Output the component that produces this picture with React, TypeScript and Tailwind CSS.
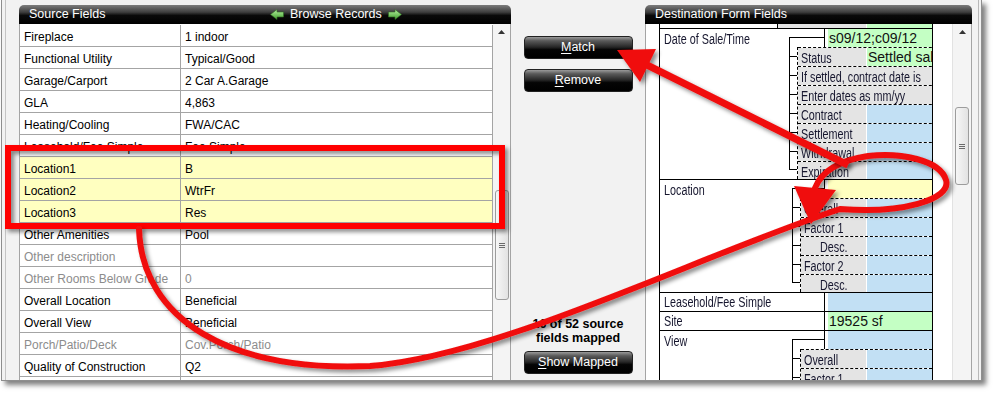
import React from "react";

type Row = { l: string; v: string; hl?: boolean; dim?: boolean };
const rows: Row[] = [
  { l: "Fireplace", v: "1 indoor" },
  { l: "Functional Utility", v: "Typical/Good" },
  { l: "Garage/Carport", v: "2 Car A.Garage" },
  { l: "GLA", v: "4,863" },
  { l: "Heating/Cooling", v: "FWA/CAC" },
  { l: "Leasehold/Fee Simple", v: "Fee Simple" },
  { l: "Location1", v: "B", hl: true },
  { l: "Location2", v: "WtrFr", hl: true },
  { l: "Location3", v: "Res", hl: true },
  { l: "Other Amenities", v: "Pool" },
  { l: "Other description", v: "", dim: true },
  { l: "Other Rooms Below Grade", v: "0", dim: true },
  { l: "Overall Location", v: "Beneficial" },
  { l: "Overall View", v: "Beneficial" },
  { l: "Porch/Patio/Deck", v: "Cov.Porch/Patio", dim: true },
  { l: "Quality of Construction", v: "Q2" },
  { l: "", v: "" },
];

const HDR =
  "h-[19px] shrink-0 rounded-t-[5px] bg-[linear-gradient(to_bottom,#7c7c7c_0%,#3e3e3e_38%,#0a0a0a_55%,#000_100%)] text-white text-[12.5px] leading-[17px] flex items-center font-['Liberation_Sans',sans-serif]";

function GreenArrow({ dir }: { dir: "l" | "r" }) {
  return (
    <svg width="14" height="11" viewBox="0 0 14 11" className={dir === "r" ? "" : "-scale-x-100"}>
      <defs>
        <linearGradient id={"ga" + dir} x1="0" y1="0" x2="0" y2="1">
          <stop offset="0" stopColor="#b6f0a0" />
          <stop offset="1" stopColor="#3f9e2c" />
        </linearGradient>
      </defs>
      <polygon points="0.5,3 7,3 7,0.5 13.5,5.5 7,10.5 7,8 0.5,8" fill={"url(#ga" + dir + ")"} stroke="#2f6d22" strokeWidth="0.6" />
    </svg>
  );
}

function Btn({ u, rest }: { u: string; rest: string }) {
  return (
    <div className="w-[109px] h-[23px] shrink-0 rounded-[4px] border border-[#222] bg-[linear-gradient(to_bottom,#9a9a9a_0%,#5a5a5a_18%,#262626_48%,#050505_60%,#000_100%)] flex items-center justify-center text-white text-[12.5px] leading-none font-['Liberation_Sans',sans-serif]">
      <span className="underline underline-offset-2">{u}</span>
      {rest}
    </div>
  );
}

function Thumb({ top, h }: { top: number; h: number }) {
  return (
    <div className="flex flex-col items-center">
      <div style={{ height: top }} />
      <div
        style={{ height: h }}
        className="w-[14px] rounded-[3px] border border-[#9c9c9c] bg-[linear-gradient(to_right,#f6f6f6,#e2e2e2)] flex flex-col items-center justify-center gap-[1px]"
      >
        <div className="w-[6px] h-px bg-[#6a6a6a]" />
        <div className="w-[6px] h-px bg-[#6a6a6a]" />
        <div className="w-[6px] h-px bg-[#6a6a6a]" />
      </div>
    </div>
  );
}

function UpArrow() {
  return (
    <svg width="7" height="4" viewBox="0 0 7 4">
      <polygon points="0,4 3.5,0 7,4" fill="#333" />
    </svg>
  );
}

function N({ children }: { children: React.ReactNode }) {
  return <span className="inline-block origin-left scale-x-[0.77] whitespace-nowrap">{children}</span>;
}

const GRAY = "bg-[#e4e4e4]";
const BLUE = "bg-[#c2e0f4]";
const GREEN = "bg-[#c4ffc4]";
const YELLOW = "bg-[#ffffc0]";

function Ticks({ first, steps }: { first: number; steps: number[] }) {
  return (
    <div className="w-[8px] shrink-0 flex flex-col">
      <div style={{ height: first }} className="border-l border-black" />
      {steps.map((s, i) => (
        <div key={i} style={{ height: s }} className="border-l border-t border-black" />
      ))}
      <div className="h-0 border-t border-black" />
    </div>
  );
}

type Sub = { l: string; full?: boolean; indent?: boolean; v?: string; vc?: string; tri?: boolean; h: number };

function SubTable({ rows, labelW }: { rows: Sub[]; labelW: number }) {
  return (
    <div className="flex-1 flex flex-col border-l border-dashed border-black">
      {rows.map((r, i) => (
        <div key={i} style={{ height: r.h }} className="shrink-0 flex border-t border-dashed border-black">
          {r.full ? (
            <div className={"flex-1 " + GRAY + " pl-[3px] pt-[2px] leading-[16px] whitespace-nowrap overflow-hidden"}>
              <N>{r.l}</N>
            </div>
          ) : (
            <>
              <div
                style={{ width: labelW }}
                className={GRAY + " shrink-0 pt-[2px] leading-[16px] whitespace-nowrap overflow-hidden " + (r.indent ? "pl-[19px]" : "pl-[3px]")}
              >
                <N>{r.l}</N>
              </div>
              <div className="w-px bg-white shrink-0" />
              <div className={"flex-1 relative overflow-hidden " + (r.vc || BLUE)}>
                {r.v && <div className="pl-px leading-[18px] text-[14px] whitespace-nowrap text-[#111]">{r.v}</div>}
                {r.tri && (
                  <svg className="absolute right-0 top-[2px]" width="9" height="14" viewBox="0 0 9 14">
                    <polygon points="0.5,0.5 8.5,7 0.5,13.5" fill="#ff1a1a" stroke="#7a0000" strokeWidth="1" />
                  </svg>
                )}
              </div>
            </>
          )}
        </div>
      ))}
    </div>
  );
}

function ValueCell({ color, text, h = 18 }: { color: string; text?: string; h?: number }) {
  return (
    <div style={{ height: h }} className="w-[108px] shrink-0 border-l border-black pl-[3px]">
      <div className={"h-full " + color + " pl-px leading-[18px] text-[14px] whitespace-nowrap text-[#111]"}>{text}</div>
    </div>
  );
}

function BracketTop({ w }: { w: number }) {
  return (
    <div style={{ width: w }} className="shrink-0 pt-[8px] h-[18px]">
      <div className="h-full border-t border-l border-black" />
    </div>
  );
}

export default function App() {
  return (
    <div className="w-[998px] h-[396px] bg-white relative overflow-hidden font-['Liberation_Sans',sans-serif]">
      <div className="ml-[1px] w-[981px] h-[381px] bg-[#f2f2f2] border-l border-r border-b border-[#8e8e8e] shadow-[4px_4px_5px_rgba(0,0,0,0.5)] flex">
        <div className="ml-[3px] w-px bg-[#c4c4c4] shrink-0" />
        <div className="w-[13px] shrink-0" />

        {/* Left panel */}
        <div className="w-[492px] shrink-0 pt-[5px] flex flex-col">
          <div className={HDR}>
            <span className="w-[251px] pl-[10px] shrink-0">Source Fields</span>
            <span className="flex items-center gap-[6px]">
              <GreenArrow dir="l" />
              <span>Browse Records</span>
              <GreenArrow dir="r" />
            </span>
          </div>
          <div className="flex-1 flex border-l border-r border-[#a4a4a4] bg-white overflow-hidden">
            <div className="w-[473px] shrink-0 pt-px flex flex-col">
              {rows.map((r, i) => (
                <div
                  key={i}
                  className={"h-[22px] shrink-0 flex border-b border-[#a4a4a4] text-[12px] " + (r.hl ? YELLOW : "bg-white") + (r.dim ? " text-[#8c8c8c]" : " text-black")}
                >
                  <div className="w-[161px] shrink-0 border-r border-[#a4a4a4] pl-[4px] pt-[3px] leading-[19px] whitespace-nowrap overflow-hidden">{r.l}</div>
                  <div className="flex-1 border-r border-[#a4a4a4] pl-[4px] pt-[3px] leading-[19px] whitespace-nowrap">{r.v}</div>
                </div>
              ))}
            </div>
            <div className="flex-1 bg-[#f4f4f4] flex flex-col items-center">
              <div className="pt-[6px]">
                <UpArrow />
              </div>
              <Thumb top={156} h={110} />
            </div>
          </div>
        </div>

        {/* Middle */}
        <div className="w-[134px] shrink-0 pt-[36px] pb-[6px] flex flex-col items-center">
          <Btn u="M" rest="atch" />
          <div className="h-[10px]" />
          <Btn u="R" rest="emove" />
          <div className="flex-1" />
          <div className="text-[12.5px] font-bold leading-[14px] text-center text-black">
            16 of 52 source
            <br />
            fields mapped
          </div>
          <div className="h-[6px]" />
          <Btn u="S" rest="how Mapped" />
        </div>

        {/* Right panel */}
        <div className="w-[327px] shrink-0 pt-[5px] flex flex-col">
          <div className={HDR}>
            <span className="pl-[10px]">Destination Form Fields</span>
          </div>
          <div className="flex-1 flex border-l border-r border-[#a4a4a4] bg-white overflow-hidden">
            <div className="ml-[13px] w-[274px] shrink-0 border-x border-black bg-white overflow-hidden flex flex-col text-[14px] text-[#16162e]">
              {/* clipped row at top */}
              <div className="h-[5px] shrink-0 border-b border-black flex">
                <div className="w-[117px] shrink-0" />
                <div className={"w-[89px] shrink-0 border-l border-black overflow-hidden " + GRAY}>
                  <div className="-mt-[13px] pl-[3px] leading-[16px] whitespace-nowrap">
                    <N>Concess. amount</N>
                  </div>
                </div>
                <div className="w-px bg-white shrink-0" />
                <div className={"flex-1 " + GREEN} />
              </div>

              {/* Date of Sale/Time */}
              <div className="h-[151px] shrink-0 border-b border-black flex">
                <div className="w-[129px] shrink-0 pl-[4px] pt-[1px] leading-[18px] whitespace-nowrap">
                  <N>Date of Sale/Time</N>
                </div>
                <div className="w-[143px] shrink-0 flex flex-col">
                  <div className="h-[18px] shrink-0 flex">
                    <BracketTop w={35} />
                    <ValueCell color={GREEN} text="s09/12;c09/12" />
                  </div>
                  <div className="flex-1 flex">
                    <Ticks first={9} steps={[19, 19, 19, 19, 19, 18]} />
                    <SubTable
                      labelW={68}
                      rows={[
                        { l: "Status", v: "Settled sale", vc: GREEN, tri: true, h: 19 },
                        { l: "If settled, contract date is", full: true, h: 19 },
                        { l: "Enter dates as mm/yy", full: true, h: 19 },
                        { l: "Contract", h: 19 },
                        { l: "Settlement", h: 19 },
                        { l: "Withdrawal", h: 19 },
                        { l: "Expiration", h: 18 },
                      ]}
                    />
                  </div>
                </div>
              </div>

              {/* Location */}
              <div className="h-[113px] shrink-0 border-b border-black flex">
                <div className="w-[132px] shrink-0 pl-[4px] pt-[1px] leading-[18px]">
                  <N>Location</N>
                </div>
                <div className="w-[140px] shrink-0 flex flex-col">
                  <div className="h-[18px] shrink-0 flex">
                    <BracketTop w={32} />
                    <ValueCell color={YELLOW} />
                  </div>
                  <div className="flex-1 flex">
                    <Ticks first={9} steps={[19, 19, 19, 18]} />
                    <SubTable
                      labelW={65}
                      rows={[
                        { l: "Overall", h: 19 },
                        { l: "Factor 1", h: 19 },
                        { l: "Desc.", indent: true, h: 19 },
                        { l: "Factor 2", h: 19 },
                        { l: "Desc.", indent: true, h: 18 },
                      ]}
                    />
                  </div>
                </div>
              </div>

              {/* Leasehold */}
              <div className="h-[19px] shrink-0 border-b border-black flex">
                <div className="w-[164px] shrink-0 pl-[4px] pt-[1px] leading-[17px] whitespace-nowrap">
                  <N>Leasehold/Fee Simple</N>
                </div>
                <ValueCell color={BLUE} />
              </div>
              {/* Site */}
              <div className="h-[19px] shrink-0 border-b border-black flex">
                <div className="w-[164px] shrink-0 pl-[4px] pt-[1px] leading-[17px]">
                  <N>Site</N>
                </div>
                <ValueCell color={GREEN} text="19525 sf" />
              </div>
              {/* View */}
              <div className="flex-1 flex">
                <div className="w-[132px] shrink-0 pl-[4px] pt-[1px] leading-[18px]">
                  <N>View</N>
                </div>
                <div className="w-[140px] shrink-0 flex flex-col">
                  <div className="h-[18px] shrink-0 flex">
                    <BracketTop w={32} />
                    <ValueCell color={BLUE} />
                  </div>
                  <div className="flex-1 flex">
                    <Ticks first={9} steps={[19, 19, 19]} />
                    <SubTable
                      labelW={65}
                      rows={[
                        { l: "Overall", h: 19 },
                        { l: "Factor 1", h: 19 },
                        { l: "Desc.", indent: true, h: 19 },
                      ]}
                    />
                  </div>
                </div>
              </div>
            </div>
            <div className="w-[19px] shrink-0" />
            <div className="flex-1 bg-[#f4f4f4] border-l border-[#e2e2e2] flex flex-col items-center">
              <div className="pt-[6px]">
                <UpArrow />
              </div>
              <Thumb top={73} h={78} />
            </div>
          </div>
        </div>

        <div className="w-[6px] shrink-0" />
        <div className="w-px bg-[#b8b8b8] shrink-0" />
      </div>

      {/* Red annotations */}
      <svg className="absolute left-0 top-0 pointer-events-none" width="998" height="396" viewBox="0 0 998 396">
        <defs>
          <filter id="sh" x="-20%" y="-20%" width="140%" height="140%">
            <feDropShadow dx="3" dy="3" stdDeviation="2" floodColor="#000" floodOpacity="0.45" />
          </filter>
        </defs>
        <g filter="url(#sh)">
          <rect x="8" y="148" width="494" height="78" fill="none" stroke="#ff0000" strokeWidth="6" />
        </g>
        <g filter="url(#sh)">
          <path
            d="M139 229 C142 320 230 372 370 366 C500 356 700 255 840 209 C900 214 952 200 946 180 C940 160 900 152 868 156 C842 160 822 170 815 188"
            fill="none"
            stroke="#f01010"
            strokeWidth="6"
            strokeLinecap="round"
          />
          <polygon points="794,186 836,190 811,224" fill="#f01010" />
        </g>
        <g filter="url(#sh)">
          <line x1="848" y1="165" x2="645" y2="64" stroke="#f01010" strokeWidth="7" />
          <polygon points="617,50 656,49 640,82" fill="#f01010" />
        </g>
      </svg>
    </div>
  );
}
